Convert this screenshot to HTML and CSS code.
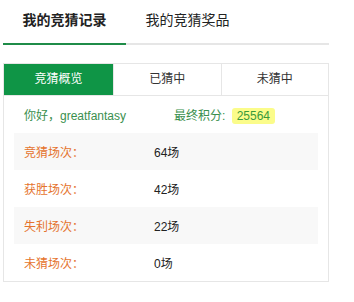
FILE: index.html
```html
<!DOCTYPE html>
<html lang="zh-CN">
<head>
    <meta charset="UTF-8">
    <title>我的竞猜记录</title>
    <link rel="stylesheet" href="styles.css">
</head>
<body>
    <div class="wrap">
        <div class="main-tabs">
            <div class="main-tab active">我的竞猜记录</div>
            <div class="main-tab">我的竞猜奖品</div>
        </div>
        <div class="panel">
            <div class="sub-tabs">
                <div class="sub-tab active">竞猜概览</div>
                <div class="sub-tab">已猜中</div>
                <div class="sub-tab">未猜中</div>
            </div>
            <div class="panel-body">
                <div class="greet">
                    <span class="greet-name">你好，greatfantasy</span>
                    <span class="greet-score">最终积分: <em class="score">25564</em></span>
                </div>
                <div class="stat odd"><span class="stat-label">竞猜场次：</span><span class="stat-value">64场</span></div>
                <div class="stat"><span class="stat-label">获胜场次：</span><span class="stat-value">42场</span></div>
                <div class="stat odd"><span class="stat-label">失利场次：</span><span class="stat-value">22场</span></div>
                <div class="stat"><span class="stat-label">未猜场次：</span><span class="stat-value">0场</span></div>
            </div>
        </div>
    </div>
</body>
</html>
```

FILE: styles.css
```css
body {
    margin: 0;
    font-family: Arial, "Liberation Sans", "Noto Sans CJK SC", sans-serif;
    font-size: 12px;
    color: #333;
    background: #fff;
}
.wrap {
    width: 326px;
    margin-left: 3px;
}
.main-tabs {
    display: flex;
    height: 43px;
    border-bottom: 2px solid #e6e6e6;
}
.main-tab {
    width: 123px;
    text-align: center;
    line-height: 41px;
    font-size: 14px;
    color: #222;
    position: relative;
}
.main-tab.active {
    font-weight: bold;
}
.main-tab.active::after {
    content: "";
    position: absolute;
    left: 0;
    right: 0;
    bottom: -2px;
    height: 2px;
    background: #1f8c48;
}
.panel {
    margin-top: 18px;
    border: 1px solid #e6e6e6;
}
.sub-tabs {
    display: flex;
    height: 31px;
    border-bottom: 1px solid #e6e6e6;
}
.sub-tab {
    flex: 1;
    text-align: center;
    line-height: 31px;
    color: #333;
    border-left: 1px solid #e6e6e6;
}
.sub-tab:first-child {
    flex: 0 0 109px;
    border-left: none;
}
.sub-tab.active {
    background: #0f9546;
    color: #fff;
}
.panel-body {
    padding: 0 10px;
}
.greet {
    display: flex;
    align-items: center;
    height: 37px;
    padding-left: 10px;
    color: #3a8f4e;
}
.greet-name {
    width: 150px;
}
.score {
    font-style: normal;
    display: inline-block;
    background: #fbfc8a;
    color: #3a9a3a;
    border-radius: 3px;
    padding: 0 5px;
    line-height: 16px;
    margin-left: 3px;
}
.stat {
    display: flex;
    align-items: center;
    height: 37px;
    padding-left: 10px;
}
.stat.odd {
    background: #f8f8f8;
}
.stat-label {
    width: 130px;
    color: #e5732d;
}
.stat-value {
    color: #222;
}
```
